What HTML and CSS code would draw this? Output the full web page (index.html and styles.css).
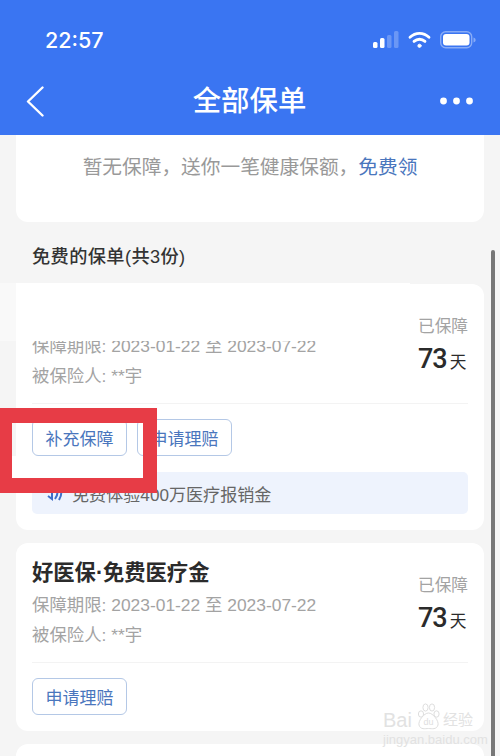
FILE: index.html
```html
<!DOCTYPE html>
<html lang="zh-CN">
<head>
    <meta charset="UTF-8">
    <meta name="viewport" content="width=device-width, initial-scale=1.0">
    <title>全部保单</title>
    <link rel="stylesheet" href="styles.css">
</head>
<body>
    <div class="page">
        <header class="topbar">
            <div class="status">
                <span class="time">22:57</span>
                <div class="status-icons">
                    <svg width="26" height="18" viewBox="0 0 26 18">
                        <rect x="0" y="11" width="4.5" height="6" rx="1.5" fill="#fff"/>
                        <rect x="7" y="7" width="4.5" height="10" rx="1.5" fill="#fff"/>
                        <rect x="14" y="4" width="4.5" height="13" rx="1.5" fill="#fff" opacity="0.25"/>
                        <rect x="21" y="0" width="4.5" height="17" rx="1.5" fill="#fff" opacity="0.25"/>
                    </svg>
                    <svg width="23" height="18" viewBox="0 0 23 18" fill="none" stroke="#fff" stroke-width="2.8" stroke-linecap="round">
                        <path d="M2 6.2C7.5 1 15.5 1 21 6.2"/>
                        <path d="M6 10.4C9.2 7.5 13.8 7.5 17 10.4"/>
                        <circle cx="11.5" cy="14.8" r="1.6" fill="#fff" stroke-width="1"/>
                    </svg>
                    <svg width="36" height="18" viewBox="0 0 36 18">
                        <rect x="0.7" y="0.7" width="31" height="16" rx="5" fill="none" stroke="#fff" stroke-opacity="0.4" stroke-width="1.4"/>
                        <rect x="3" y="3" width="26.5" height="11.5" rx="3" fill="#fff"/>
                        <path d="M33.5 6.5C35 7 35.6 8 35.6 9S35 11 33.5 11.5Z" fill="#fff" fill-opacity="0.4"/>
                    </svg>
                </div>
            </div>
            <nav class="nav">
                <svg width="18" height="31" viewBox="0 0 18 31" fill="none" stroke="#fff" stroke-width="2.4" stroke-linecap="round" stroke-linejoin="round">
                    <path d="M16.5 1.5L2 15.5L16.5 29.5"/>
                </svg>
                <h1>全部保单</h1>
                <svg class="more" width="33" height="8" viewBox="0 0 33 8" fill="#fff">
                    <circle cx="3.5" cy="4" r="3.4"/>
                    <circle cx="16.5" cy="4" r="3.4"/>
                    <circle cx="29.5" cy="4" r="3.4"/>
                </svg>
            </nav>
        </header>

        <main class="content">
            <div class="notice">暂无保障，送你一笔健康保额，<a>免费领</a></div>
            <h2>免费的保单(共3份)</h2>

            <section class="card">
                <div class="card-head">
                    <div class="info">
                        <div class="name">好医保·住院医疗</div>
                        <div class="meta">保障期限: 2023-01-22 至 2023-07-22</div>
                        <div class="meta">被保险人: **宇</div>
                    </div>
                    <div class="days">
                        <div class="days-label">已保障</div>
                        <div class="days-num">73<span>天</span></div>
                    </div>
                </div>
                <div class="actions">
                    <button>补充保障</button>
                    <button>申请理赔</button>
                </div>
                <div class="banner">
                    <svg width="20" height="16" viewBox="0 0 20 16" fill="none" stroke="#3f6fc9" stroke-width="2">
                        <path d="M1 5H9V14L5 11"/>
                        <path d="M13 3C15 6 15 10 12 14M17 2C19 6 19 10 16 15"/>
                    </svg>
                    <span>免费体验400万医疗报销金</span>
                </div>
            </section>

            <section class="card">
                <div class="card-head">
                    <div class="info">
                        <div class="name">好医保·免费医疗金</div>
                        <div class="meta">保障期限: 2023-01-22 至 2023-07-22</div>
                        <div class="meta">被保险人: **宇</div>
                    </div>
                    <div class="days">
                        <div class="days-label">已保障</div>
                        <div class="days-num">73<span>天</span></div>
                    </div>
                </div>
                <div class="actions">
                    <button>申请理赔</button>
                </div>
            </section>

            <section class="card card-next"></section>
        </main>

        <div class="mask"></div>
        <div class="scrollbar"></div>
        <div class="redbox"><div class="redbox-fill"></div></div>

        <div class="watermark">
            <div class="wm-logo">
                <span class="wm-bai">Bai</span>
                <svg width="23" height="27" viewBox="0 0 23 27" fill="#fff" stroke="#dedede" stroke-width="1">
                    <ellipse cx="4" cy="11" rx="2.6" ry="3.2"/>
                    <ellipse cx="8.5" cy="4.5" rx="2.6" ry="3.6"/>
                    <ellipse cx="15" cy="4.5" rx="2.6" ry="3.6"/>
                    <ellipse cx="19.5" cy="11" rx="2.6" ry="3.2"/>
                    <path d="M11.5 10C16 10 22 18 21 22C19.5 27 15 25.5 11.5 25.5S3.5 27 2 22C1 18 7 10 11.5 10Z"/>
                    <text x="11.5" y="22" font-size="9" text-anchor="middle" fill="#dedede" stroke="none">du</text>
                </svg>
                <span class="wm-cn">经验</span>
            </div>
            <div class="wm-url">jingyan.baidu.com</div>
        </div>
    </div>
</body>
</html>
```

FILE: styles.css
```css
* {
    box-sizing: border-box;
}

body {
    margin: 0;
    font-family: "Liberation Sans", "Noto Sans CJK SC", sans-serif;
    background-color: #f5f5f5;
}

.page {
    position: relative;
    width: 500px;
    height: 756px;
    overflow: hidden;
    background-color: #f5f5f5;
}

.topbar {
    height: 135px;
    background-color: #3a75f2;
    color: white;
}

.status {
    display: flex;
    justify-content: space-between;
    align-items: center;
    height: 60px;
    padding: 20px 24px 0 45px;
}

.time {
    font-family: Inter, "Liberation Sans", sans-serif;
    font-size: 21.5px;
    font-weight: 500;
}

.status-icons {
    display: flex;
    align-items: center;
    gap: 9px;
}

.nav {
    display: grid;
    grid-template-columns: 1fr auto 1fr;
    align-items: center;
    height: 40px;
    margin-top: 21px;
    padding: 0 27px 0 26px;
}

.nav h1 {
    margin: 0;
    font-size: 28.4px;
    font-weight: 500;
    line-height: 40px;
}

.more {
    justify-self: end;
}

.content {
    padding: 0 16px;
}

.notice {
    height: 87px;
    padding-top: 18px;
    background-color: white;
    border-radius: 0 0 12px 12px;
    font-size: 19.7px;
    line-height: 28px;
    color: #999;
    text-align: center;
}

.notice a {
    color: #4a76bd;
}

h2 {
    margin: 0;
    padding: 23px 16px 15px;
    font-size: 18.2px;
    font-weight: 500;
    line-height: 24px;
    letter-spacing: 0.4px;
    color: #333;
}

.card {
    margin-bottom: 13px;
    padding: 14px 16px 16px;
    background-color: white;
    border-radius: 12px;
}

.card-head {
    display: flex;
    justify-content: space-between;
    align-items: center;
    padding-bottom: 12px;
    border-bottom: 1px solid #f3f3f3;
}

.name {
    font-size: 21.3px;
    font-weight: 700;
    line-height: 33px;
    color: #2b2b2b;
}

.meta {
    font-size: 17.4px;
    line-height: 30px;
    color: #a3a3a3;
}

.days {
    width: 50px;
    padding-top: 8px;
}

.days-label {
    font-size: 16.7px;
    line-height: 24px;
    color: #a3a3a3;
    white-space: nowrap;
}

.days-num {
    font-family: Roboto, "Liberation Sans", "Noto Sans CJK SC", sans-serif;
    font-size: 27px;
    font-weight: 500;
    line-height: 40px;
    letter-spacing: -1px;
    color: #2b2b2b;
    white-space: nowrap;
}

.days-num span {
    margin-left: 3px;
    font-size: 16.7px;
    font-weight: 400;
    letter-spacing: 0;
}

.actions {
    display: flex;
    gap: 10px;
    margin-top: 15px;
}

button {
    width: 95px;
    height: 37px;
    padding: 0;
    font-family: inherit;
    font-size: 17px;
    color: #4a76bd;
    background-color: white;
    border: 1px solid #b4c8e6;
    border-radius: 6px;
}

.banner {
    display: flex;
    align-items: center;
    gap: 9px;
    height: 42px;
    margin-top: 16px;
    padding-left: 11px;
    font-size: 17.1px;
    color: #666;
    background-color: #eef3fd;
    border-radius: 5px;
}

.card-next {
    height: 60px;
    margin-bottom: 0;
}

.mask {
    position: absolute;
    top: 283px;
    left: 0;
    width: 410px;
    height: 58px;
    background: linear-gradient(90deg, #f9f9f9 16px, white 16px);
}

.scrollbar {
    position: absolute;
    top: 250px;
    left: 491px;
    width: 4px;
    height: 506px;
    background-color: #777;
    border-radius: 2px 2px 0 0;
}

.redbox {
    position: absolute;
    top: 408px;
    left: 0;
    width: 157px;
    height: 85px;
    border: 15px solid #e73c46;
    border-left-width: 12px;
    border-right-width: 14px;
}

.redbox-fill {
    height: 22px;
    margin-top: 33px;
    background-color: white;
}

.watermark {
    position: absolute;
    top: 703px;
    left: 383px;
    width: 92px;
    color: #e2e2e2;
}

.wm-logo {
    display: flex;
    align-items: flex-end;
    height: 27px;
    white-space: nowrap;
}

.wm-bai {
    width: 34px;
    font-size: 20px;
    line-height: 20px;
}

.wm-cn {
    margin-left: 3px;
    font-size: 15px;
    line-height: 20px;
}

.wm-url {
    margin-top: 3px;
    font-size: 13px;
    line-height: 14px;
    white-space: nowrap;
}
```
